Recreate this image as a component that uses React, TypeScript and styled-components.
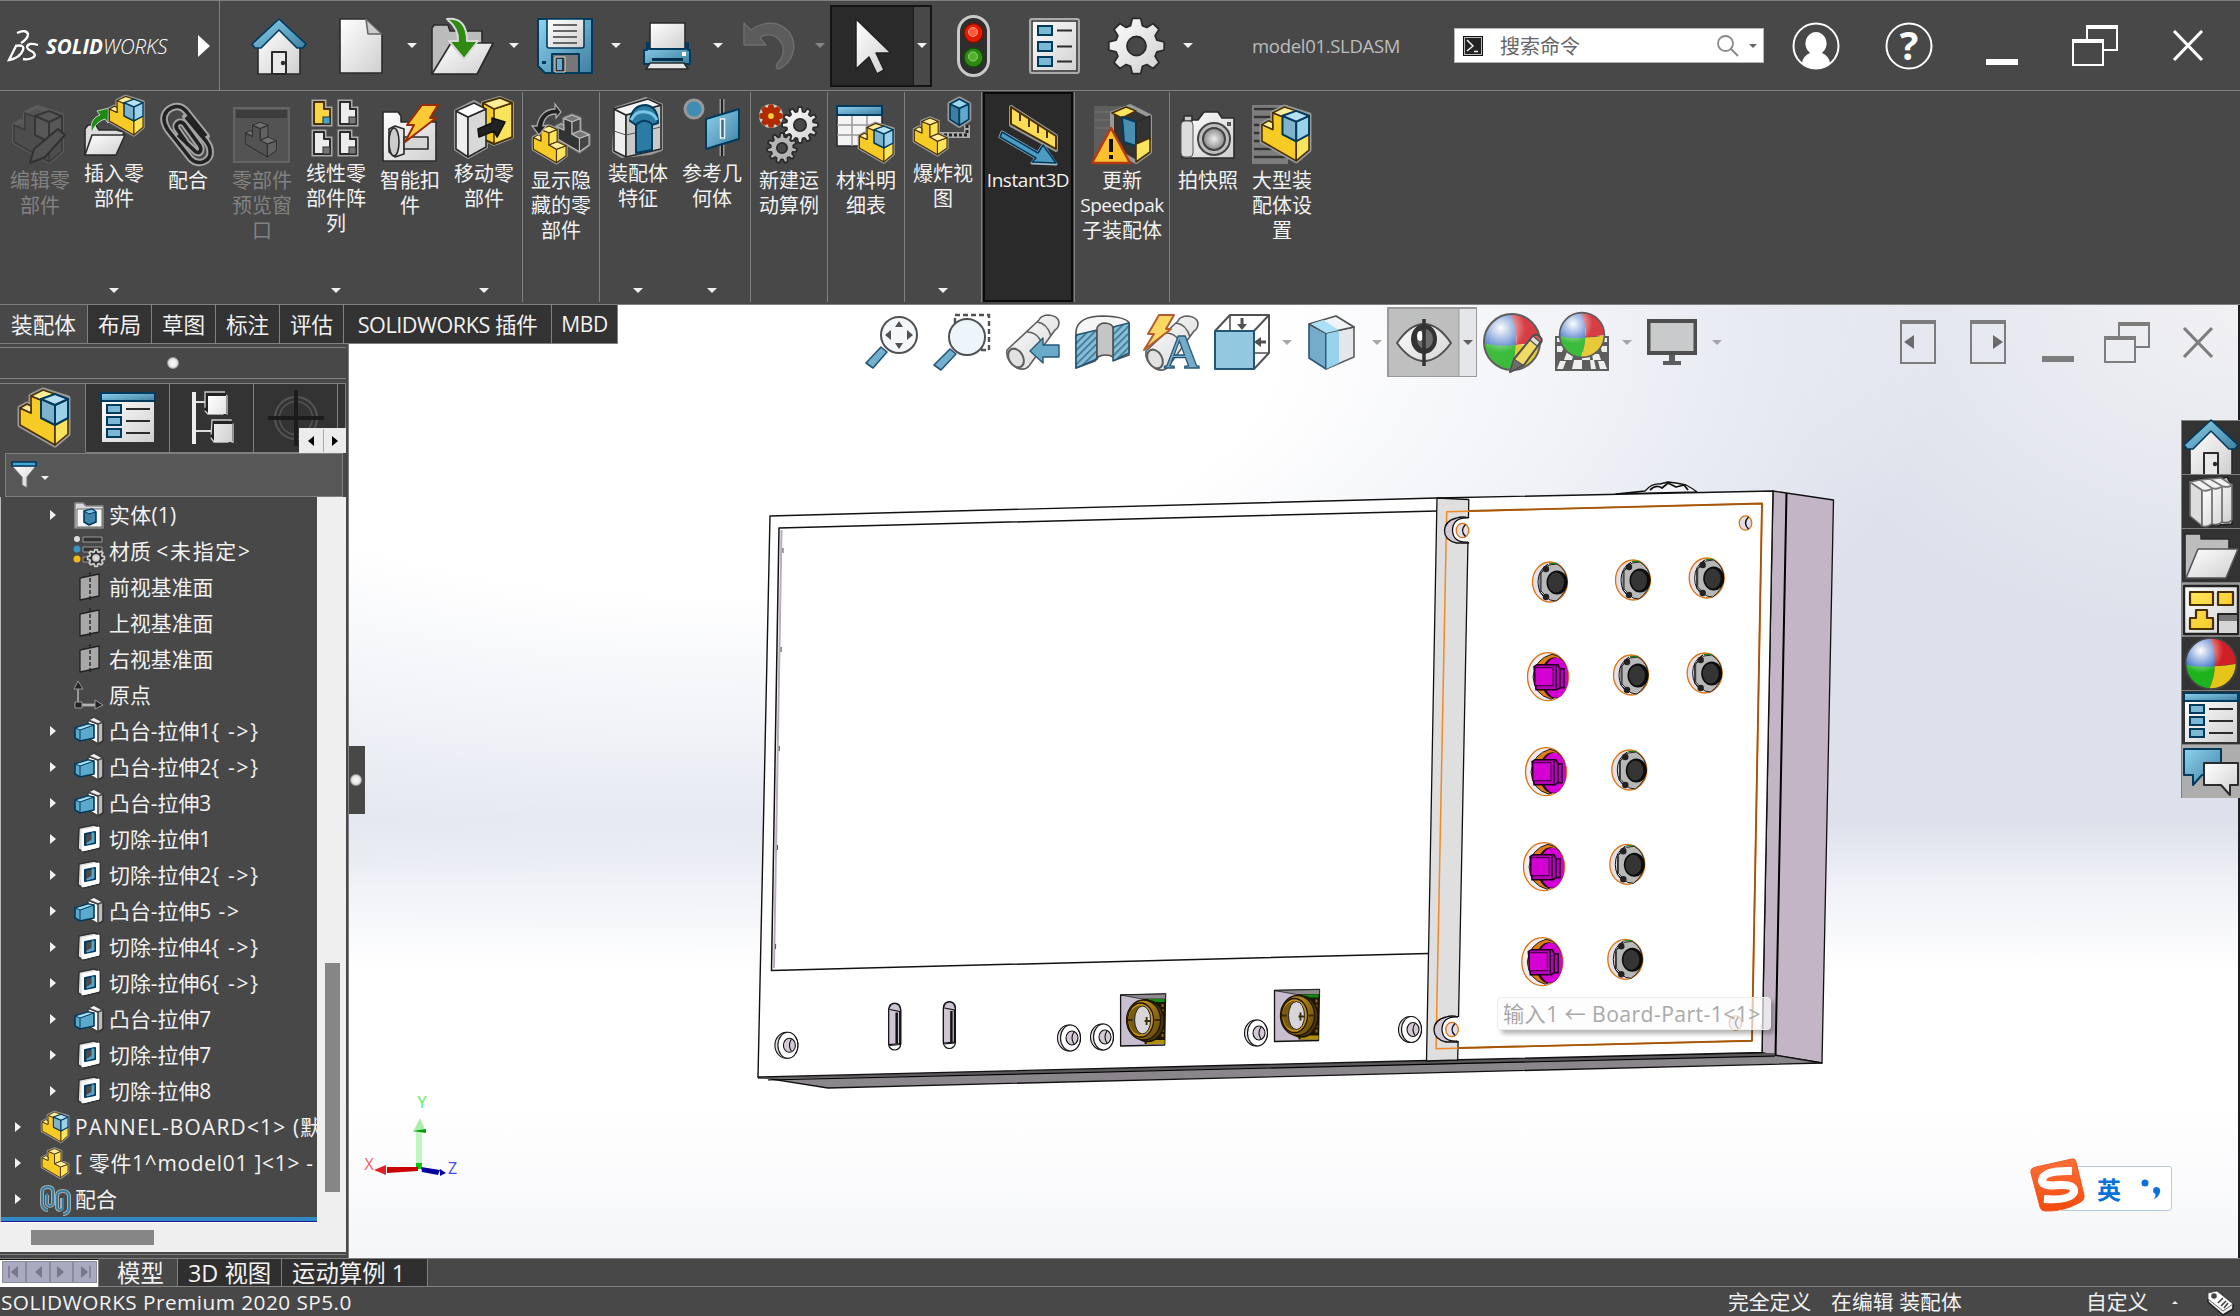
import React, { ReactNode } from 'react';
import styled, { createGlobalStyle, css } from 'styled-components';

const LINE = '#808080';
const BAR = '#484848';
const DARK = '#333333';
const NAVY = '#003a5d';
const BROWN = '#4a3000';
const INK = '#2b2b2b';

const Global = createGlobalStyle`
  * { box-sizing: border-box; }
  html, body { margin: 0; padding: 0; background: ${BAR}; }
  body { overflow: hidden; font-family: "Open Sans", "Noto Sans CJK SC", sans-serif; color: #f2f2f2; }
  svg { display: block; flex: none; overflow: visible; }
`;

const Window = styled.div`
  width: 2240px;
  height: 1316px;
  display: flex;
  flex-direction: column;
  background: ${BAR};
  white-space: nowrap;
`;

/* ---------- title bar ---------- */
const TitleBar = styled.header`
  height: 91px;
  display: flex;
  align-items: center;
  border-top: 1px solid ${LINE};
  border-bottom: 1px solid ${LINE};
`;
const Brand = styled.div`
  width: 220px;
  height: 100%;
  display: flex;
  align-items: center;
  padding-left: 8px;
  border-right: 1px solid ${LINE};
`;
const BrandName = styled.span`
  margin-left: 7px;
  width: 152px;
  font-size: 20.5px;
  font-style: italic;
  font-weight: 300;
  color: #fff;
  letter-spacing: -0.1px;
  b { font-weight: 700; letter-spacing: 0; }
`;
const Slot = styled.div<{ $ml: number; $w?: number }>`
  margin-left: ${p => p.$ml}px;
  ${p => p.$w && css`width: ${p.$w}px;`}
  flex: none;
  display: flex;
  align-items: center;
`;
const Caret = styled.i<{ $color?: string; $size?: number; $up?: boolean }>`
  display: block;
  flex: none;
  width: 0;
  height: 0;
  border: ${p => p.$size ?? 5}px solid transparent;
  ${p => p.$up
    ? css`border-top: 0; border-bottom: ${p.$size ?? 5}px solid ${p.$color ?? '#f0f0f0'};`
    : css`border-bottom: 0; border-top: ${(p.$size ?? 5) + 0.5}px solid ${p.$color ?? '#f0f0f0'};`}
`;
const PickTool = styled.div`
  margin-left: 5px;
  width: 102px;
  height: 82px;
  flex: none;
  display: grid;
  grid-template-columns: 82px 1fr;
  align-items: center;
  justify-items: center;
  border: 2px solid #141414;
  background: linear-gradient(90deg, #2a2a2a 81px, #1c1c1c 81px, #1c1c1c 82px, ${BAR} 82px);
`;
const DocName = styled.span`
  margin-left: 59px;
  width: 202px;
  flex: none;
  font-size: 18.5px;
  letter-spacing: -0.3px;
  color: #bdbdbd;
`;
const Search = styled.div`
  width: 310px;
  height: 35px;
  flex: none;
  display: flex;
  align-items: center;
  padding-left: 8px;
  background: #fff;
  border: 1px solid #b5b5b5;
  color: #666;
  font-size: 20px;
  span { margin-left: 17px; width: 217px; }
`;

/* ---------- ribbon ---------- */
const Ribbon = styled.nav`
  height: 214px;
  display: flex;
  padding: 1px 0 2px 2px;
  border-bottom: 1px solid ${LINE};
`;
const Group = styled.div`
  display: flex;
  padding: 0 1px;
  border-right: 1px solid ${LINE};
  &:last-child { border-right-color: transparent; }
`;
const Command = styled.button<{ $w?: number; $on?: boolean; $off?: boolean; $menu?: boolean }>`
  width: ${p => p.$w ?? 74}px;
  display: flex;
  flex-direction: column;
  align-items: center;
  margin: 0;
  padding: ${p => (p.$menu ? 5 : 12)}px 0 0;
  border: ${p => (p.$on ? '2px solid #0a0a0a' : '0')};
  ${p => p.$on && css`padding-top: 10px;`}
  background: ${p => (p.$on ? '#2a2a2a' : 'transparent')};
  color: ${p => (p.$off ? '#828282' : '#f2f2f2')};
  font: 20px/25px "Open Sans", "Noto Sans CJK SC", sans-serif;
  svg { margin-bottom: 2px; }
  i { margin-top: auto; margin-bottom: 9px; }
`;
const Line = styled.span<{ $latin: boolean }>`
  height: 25px;
  font-size: ${p => (p.$latin ? 19 : 20)}px;
  letter-spacing: ${p => (p.$latin ? -0.45 : 0)}px;
`;

/* ---------- work area ---------- */
const Work = styled.main`
  height: 953px;
  display: grid;
  grid-template: 953px / 2240px;
`;
const Left = styled.div`
  grid-area: 1 / 1;
  z-index: 1;
  justify-self: start;
  display: flex;
  flex-direction: column;
  align-items: flex-start;
`;
const Tabs = styled.div`
  height: 39px;
  display: flex;
  background: ${DARK};
  border-bottom: 1px solid ${LINE};
  border-right: 1px solid ${LINE};
`;
const Tab = styled.div<{ $w: number; $on?: boolean; $latin?: boolean }>`
  width: ${p => p.$w}px;
  height: 38px;
  line-height: 39px;
  text-align: center;
  font-size: 21.6px;
  border-right: 1px solid ${LINE};
  background: ${p => (p.$on ? BAR : DARK)};
  letter-spacing: ${p => (p.$latin ? -0.45 : 0)}px;
  &:last-child { border-right: 0; font-size: 21px; letter-spacing: -0.4px; }
`;
const PanelRow = styled.div`
  display: flex;
  align-items: center;
`;
const Panel = styled.aside`
  width: 349px;
  height: 914px;
  display: flex;
  flex-direction: column;
  background: ${BAR};
  border-right: 1px solid ${LINE};
`;
const Grip = styled.div`
  height: 32px;
  margin-top: 3px;
  width: 346px;
  flex: none;
  display: grid;
  place-items: center;
  border-top: 1px solid ${LINE};
  border-bottom: 1px solid ${LINE};
`;
const Dot = styled.span`
  width: 12px;
  height: 12px;
  border-radius: 50%;
  border: 1px solid #999;
  background: radial-gradient(#f4f4f4 30%, #c4c4c4);
`;
const PanelTabs = styled.div`
  margin-top: 4px;
  height: 70px;
  width: 346px;
  flex: none;
  display: grid;
  grid-template-columns: 86px 84px 84px 84px 8px;
  border-top: 1px solid ${LINE};
  position: relative;
`;
const PanelTab = styled.div<{ $on?: boolean }>`
  display: grid;
  place-items: center;
  border-right: 1px solid ${LINE};
  border-bottom: 1px solid ${p => (p.$on ? BAR : LINE)};
  background: ${p => (p.$on ? BAR : DARK)};
`;
const Pager = styled.div`
  position: absolute;
  right: 0;
  bottom: 0;
  width: 47px;
  height: 25px;
  display: grid;
  grid-template-columns: 1fr 1fr;
  gap: 1px;
  background: #aaa;
  border: 1px solid #e8e8e8;
  border-right: 0;
  span { display: grid; place-items: center; background: #ececec; }
`;
const Filter = styled.div`
  margin-left: 5px;
  width: 338px;
  height: 44px;
  flex: none;
  display: flex;
  align-items: center;
  gap: 3px;
  padding-left: 5px;
  background: #575757;
  border: 1px solid ${LINE};
  i { margin-top: 6px; }
`;
const TreeBox = styled.div`
  width: 346px;
  height: 755px;
  flex: none;
  display: grid;
  grid-template: 726px 29px / 317px 29px;
  background: #efefef;
`;
const Tree = styled.ul`
  margin: 0;
  padding: 0;
  list-style: none;
  overflow: hidden;
  background: ${BAR};
  border-left: 1px solid #b9b9b9;
  border-bottom: 1px solid #fff;
`;
const Row = styled.li<{ $root?: boolean }>`
  height: 36px;
  display: grid;
  grid-template-columns: ${p => (p.$root ? '26px 32px auto' : '61px 33px auto')};
  padding-left: ${p => (p.$root ? 14 : 12)}px;
  align-items: center;
  justify-content: start;
  font-size: 20.9px;
  line-height: 36px;
  > :first-child { justify-self: start; margin-left: ${p => (p.$root ? 0 : 37)}px; }
`;
const RowText = styled.span<{ $ls: number }>`
  margin-left: 2px;
  letter-spacing: ${p => p.$ls}px;
`;
const Suffix = styled.span`
  letter-spacing: 1.8px;
`;
const Arrow = styled.i<{ $show?: boolean; $color?: string; $left?: boolean }>`
  width: 0;
  height: 0;
  border: 5.5px solid transparent;
  ${p => (p.$left ? 'border-left: 0; border-right' : 'border-right: 0; border-left')}: 6px solid ${p => p.$color ?? '#f2f2f2'};
  visibility: ${p => (p.$show ? 'visible' : 'hidden')};
`;
const Rollback = styled.div`
  height: 5px;
  background: #3389c5;
  border-bottom: 1px solid #1c1c9c;
`;
const VTrack = styled.div`
  padding: 466px 6px 31px 8px;
  div { height: 229px; background: #868686; }
`;
const HTrack = styled.div`
  padding: 7px 0 0 31px;
  div { width: 123px; height: 15px; background: #868686; }
`;
const PanelFoot = styled.div`
  height: 3px;
  width: 346px;
  border-bottom: 1px solid ${LINE};
`;
const Splitter = styled.div`
  width: 16px;
  height: 68px;
  margin-top: -42px;
  display: grid;
  place-items: center;
  background: ${BAR};
  padding-right: 2px;
`;

const Viewport = styled.section`
  grid-area: 1 / 1;
  position: relative;
  display: flex;
  flex-direction: column;
  border-right: 2px solid #1c1e22;
  background:
    linear-gradient(180deg, rgba(255,255,255,0) 54%, rgba(255,255,255,.55) 61%, #fff 70%, #fff 84%, #f5f6f9 100%),
    radial-gradient(ellipse 1250px 540px at 700px 40px, #fff 0, #fff 46%, rgba(255,255,255,.55) 72%, rgba(255,255,255,0) 100%),
    radial-gradient(ellipse 480px 330px at 2240px 0, #f1f1f4 0, rgba(238,238,242,0) 100%),
    linear-gradient(90deg, #dfe4ee, #dde1ec 85%, #dee1eb);
`;
const Scene = styled.svg`
  position: absolute;
  left: 0;
  top: 0;
`;
const HeadsUp = styled.div`
  height: 74px;
  display: flex;
  align-items: center;
  padding-left: 865px;
  opacity: 0.85;
  z-index: 1;
`;
const EyeTool = styled.div`
  margin: 0 5px 0 5px;
  width: 90px;
  height: 70px;
  flex: none;
  display: grid;
  grid-template-columns: 70px 1fr;
  align-items: center;
  justify-items: center;
  border: 2px solid #8a8a8a;
  border-width: 2px 1px 1px 2px;
  background: linear-gradient(90deg, #b5b5b5 69px, #9a9a9a 69px, #9a9a9a 70px, #e3e4e8 71px);
`;
const TaskPane = styled.div`
  position: relative;
  z-index: 1;
  width: 59px;
  margin: 41px -2px 0 auto;
  display: flex;
  flex-direction: column;
  border-left: 1px solid ${LINE};
`;
const TaskTab = styled.div<{ $bg?: string }>`
  height: 54px;
  display: grid;
  place-items: center;
  border-top: 1px solid ${LINE};
  background: ${p => p.$bg ?? DARK};
`;
const Hint = styled.div`
  position: absolute;
  left: 1497px;
  top: 692px;
  width: 274px;
  height: 33px;
  padding-left: 5px;
  line-height: 31px;
  font-size: 21.2px;
  letter-spacing: 0.4px;
  color: #a9a9a9;
  border: 1px solid #ededed;
  border-radius: 4px;
  background: rgba(252,252,253,.68);
  box-shadow: 4px 4px 4px rgba(0,0,0,.28);
`;
const Ime = styled.div`
  position: absolute;
  z-index: 1;
  left: 2030px;
  top: 853px;
  display: flex;
  align-items: center;
`;
const ImeBox = styled.div`
  position: relative;
  z-index: -1;
  margin-left: -26px;
  width: 112px;
  height: 45px;
  margin-top: 7px;
  padding-left: 36px;
  display: flex;
  align-items: center;
  gap: 20px;
  background: #fff;
  border: 1px solid #b8cbe4;
  border-radius: 3px;
  color: #0a70da;
  font-size: 24px;
  font-weight: 700;
`;

/* ---------- bottom ---------- */
const SheetBar = styled.div`
  height: 29px;
  display: flex;
  border-bottom: 1px solid ${LINE};
  border-top: 1px solid ${LINE};
`;
const SheetNav = styled.div`
  width: 99px;
  height: 28px;
  padding: 1px 1px 4px 2px;
  display: grid;
  grid-template-columns: repeat(4, 1fr);
  background: #fff;
  border-top: 1px solid #111;
  border-right: 1px solid ${LINE};
  span { display: grid; place-items: center; background: #a9a9bf; border: 1px solid #8b8b9e; }
`;
const Sheet = styled.div<{ $w: number; $on?: boolean; $pad: number }>`
  width: ${p => p.$w}px;
  padding-left: ${p => p.$pad}px;
  line-height: 29px;
  font-size: 23.4px;
  background: ${p => (p.$on ? BAR : '#2f2f2f')};
  border-right: 1px solid ${LINE};
`;
const Status = styled.footer`
  height: 29px;
  display: flex;
  align-items: center;
  padding: 2px 0 0 1px;
  font-size: 20.8px;
  line-height: 27px;
`;
const Cell = styled.div<{ $w: number; $ls?: number }>`
  width: ${p => p.$w}px;
  letter-spacing: ${p => p.$ls ?? 0}px;
  flex: none;
`;

/* ---------- icon pieces ---------- */
type G = { d: string; f?: string; s?: string; w?: number };
const S = ({ d, f = 'none', s = INK, w = 1.6 }: G) => (
  <path d={d} fill={f} stroke={s} strokeWidth={w} strokeLinejoin="round" />
);
const Ico = ({ w, h, vb, children }: { w: number; h: number; vb?: string; children: ReactNode }) => (
  <svg width={w} height={h} viewBox={vb ?? `0 0 ${w} ${h}`}>{children}</svg>
);
const DefsSvg = styled.svg`
  position: absolute;
`;

const Defs = () => (
  <DefsSvg width="0" height="0">
    <defs>
      <linearGradient id="paper" x1="0" y1="0" x2="1" y2="1"><stop offset="0" stopColor="#fff" /><stop offset="1" stopColor="#cfcfcf" /></linearGradient>
      <linearGradient id="blue" x1="0" y1="0" x2="1" y2="1"><stop offset="0" stopColor="#8ed3f0" /><stop offset="1" stopColor="#3f7f9f" /></linearGradient>
      <linearGradient id="gold" x1="0" y1="0" x2="1" y2="1"><stop offset="0" stopColor="#ffe65c" /><stop offset="1" stopColor="#f3c21a" /></linearGradient>
      <linearGradient id="brass" x1="0" y1="0" x2="1" y2="1"><stop offset="0" stopColor="#d9a322" /><stop offset="1" stopColor="#5c430a" /></linearGradient>
      <linearGradient id="ime" x1="0" y1="0" x2="0" y2="1"><stop offset="0" stopColor="#fb6f3a" /><stop offset="1" stopColor="#f24a0c" /></linearGradient>
      <radialGradient id="shine" cx=".3" cy=".25" r=".55"><stop offset="0" stopColor="#fff" /><stop offset=".8" stopColor="#fff" stopOpacity="0" /></radialGradient>
      <radialGradient id="lens"><stop offset="0" stopColor="#eee" /><stop offset="1" stopColor="#888" /></radialGradient>
      <pattern id="hatch" width="5" height="5" patternUnits="userSpaceOnUse" patternTransform="rotate(45)"><rect width="5" height="5" fill="#6fb4d3" /><rect width="1.6" height="5" fill="#1d5876" /></pattern>
      <clipPath id="ball"><circle cx="30" cy="30" r="28" /></clipPath>
    </defs>
  </DefsSvg>
);

const AsmShape = () => (
  <g>
    <S d="M2 20L9 16L13 18V8L25 2L50 10V46L37 57L2 37Z" f="#999" s="#999" w={5} />
    <S d="M2 20L13 25V8L23 12V30L37 37V57L2 37Z" f="#f7cb25" s={BROWN} />
    <S d="M37 37L50 30V46L37 57Z" f="#fbe45d" s={BROWN} />
    <S d="M13 8L25 2L37 6L23 12Z" f="#fdee9a" s={BROWN} />
    <S d="M2 20L9 16L13 18V25Z" f="#fdee9a" s={BROWN} />
    <S d="M23 11L37 17V37L23 30Z" f="#7fb2cc" s={NAVY} w={2} />
    <S d="M37 17L50 11V30L37 37Z" f="#9bd2ea" s={NAVY} w={2} />
    <S d="M23 11L37 6L50 11L37 17Z" f="#b9e0f1" s={NAVY} w={2} />
  </g>
);
const PartShape = ({ a = '#f7cb25', b = '#fbe45d', c = '#fdee9a', s = BROWN, halo = '#999' }) => (
  <g>
    <S d="M2 20L9 16L13 18V8L25 3L37 8V26L50 32V47L36 57L2 37Z" f={halo} s={halo} w={5} />
    <S d="M2 20L13 25V8L25 13V31L36 37V57L2 37Z" f={a} s={s} />
    <S d="M36 37L50 32V47L36 57ZM25 13L37 8V26L25 31Z" f={b} s={s} />
    <S d="M13 8L25 3L37 8L25 13ZM25 31L37 26L50 32L36 37ZM2 20L9 16L13 18V25Z" f={c} s={s} />
  </g>
);
const Box3 = ({ x = 0, y = 0, k = 1 }) => (
  <g transform={`translate(${x} ${y}) scale(${k})`}>
    <S d="M0 6L11 0L22 6V24L11 31L0 24Z" f="#999" s="#999" w={6} />
    <S d="M0 6L11 11V31L0 24Z" f="#3c7fa0" s={NAVY} w={2} />
    <S d="M11 11L22 6V24L11 31Z" f="#63a9cb" s={NAVY} w={2} />
    <S d="M0 6L11 0L22 6L11 11Z" f="#9bd6ee" s={NAVY} w={2} />
  </g>
);
const Gear = ({ cx, cy, r, n = 8, f = 'url(#paper)', hole = BAR, s = INK }: any) => {
  const pts: string[] = [];
  for (let i = 0; i < n; i++) {
    const a = (i * 2 * Math.PI) / n;
    const u = Math.PI / n;
    ([[-0.72, 0.76], [-0.38, 1], [0.38, 1], [0.72, 0.76]] as number[][]).forEach(([o, q]) =>
      pts.push(`${(cx + Math.sin(a + o * u) * r * q).toFixed(1)} ${(cy - Math.cos(a + o * u) * r * q).toFixed(1)}`));
  }
  return (
    <g>
      <S d={`M${pts.join('L')}Z`} f={f} s={s} w={1.8} />
      <circle cx={cx} cy={cy} r={r * 0.34} fill={hole} stroke={s} strokeWidth="1.8" />
    </g>
  );
};
const Ball = () => (
  <g>
    <g clipPath="url(#ball)">
      <rect width="34" height="34" fill="#2c63c4" />
      <path d="M28 0Q36 18 34 33L60 30V0Z" fill="#d21f26" />
      <path d="M0 31Q18 35 34 33Q34 46 27 60H0Z" fill="#1db31d" />
      <path d="M34 33Q34 46 27 60H60V30Q46 33 34 33Z" fill="#e6c318" />
    </g>
    <circle cx="30" cy="30" r="28" fill="url(#shine)" stroke="#444" strokeWidth="2" />
  </g>
);
const House = () => (
  <g>
    <S d="M7 26V56H49V26L28 8Z" f="url(#paper)" />
    <S d="M21 56V34H35V56Z" f="#e9e9e9" w={2} />
    <circle cx="32" cy="45" r="2.2" fill={INK} />
    <S d="M28 1L55 26L52 30H46L28 12L10 30H4L1 26Z" f="url(#blue)" s={NAVY} />
  </g>
);
const ListCard = () => (
  <g>
    <path d="M2 6H54V50H2Z" fill="url(#paper)" />
    <S d="M1 1H55V9H1Z" f="url(#blue)" s={NAVY} w={2} />
    {[13, 25, 37].map(y => (
      <g key={y}>
        <rect x="7" y={y} width="14" height="8" fill="#79b9d6" stroke={NAVY} strokeWidth="2" />
        <path d={`M26 ${y + 4}H50`} stroke={INK} strokeWidth="2" />
      </g>
    ))}
  </g>
);
const Restore = ({ c, w = 46, bg = BAR }: { c: string; w?: number; bg?: string }) => (
  <Ico w={w} h={41} vb="0 0 46 41">
    <rect x="15" y="1" width="30" height="24" fill="none" stroke={c} strokeWidth="2" /><path d="M14 2H46" stroke={c} strokeWidth="4" />
    <rect x="1" y="15" width="30" height="25" fill={bg} stroke={c} strokeWidth="2" /><path d="M0 16H32" stroke={c} strokeWidth="4" />
  </Ico>
);
const Cross = ({ c }: { c: string }) => <Ico w={32} h={31}><path d="M2 1L30 30M30 1L2 30" stroke={c} strokeWidth="3.2" /></Ico>;

/* ribbon pictures, all in a 60 x 60 box */
const pics: Record<string, ReactNode> = {
  edit: <g opacity=".85"><g transform="translate(2,1)"><S d="M2 20L9 16L13 18V8L25 2L50 10V46L37 57L2 37Z" f="#555" s="#5f5f5f" w={4} /><S d="M2 20L13 25V8L23 12V30L37 37V57L2 37ZM37 37L50 30V46L37 57Z" f="#4f4f4f" s="#393939" /><S d="M23 11L37 17V37L23 30ZM37 17L50 11V30L37 37ZM23 11L37 6L50 11L37 17Z" f="#5a5a5a" s="#333" w={2} /></g><S d="M20 59L24 45L48 25L55 31L35 53Z" f="#555" s="#2f2f2f" w={2} /></g>,
  insert: <g><S d="M1 58V32L4 28H12L15 33H32L40 35L31 58Z" f="#ddd" /><S d="M1 58L8 38H41L32 58Z" f="url(#paper)" />
    <path d="M8 36C5 26 10 20 16 18L13 14L25 11L24 26L21 22C15 24 10 28 8 36Z" fill="#1f8a12" stroke="#eee" strokeWidth=".8" />
    <g transform="translate(24,-2) scale(.7)"><AsmShape /></g></g>,
  mate: <g><path d="M48 32L28 7C22 0 14 2 9 7C4 13 6 20 10 26L33 55C40 62 54 58 52 46C52 42 50 40 48 37L28 13M20 31L38 48C42 50 44 46 42 42L26 20C22 16 16 20 19 25L30 41" fill="none" stroke="#fff" strokeWidth="7.5" opacity=".5" strokeLinecap="round" />
    <path d="M48 32L28 7C22 0 14 2 9 7C4 13 6 20 10 26L33 55C40 62 54 58 52 46C52 42 50 40 48 37L28 13M20 31L38 48C42 50 44 46 42 42L26 20C22 16 16 20 19 25L30 41" fill="none" stroke="#222" strokeWidth="3.6" /></g>,
  preview: <g opacity=".85"><rect x="2" y="4" width="55" height="54" fill="#555" stroke="#6a6a6a" strokeWidth="2" /><rect x="4" y="6" width="51" height="8" fill="#3a3a3a" /><g transform="translate(12,16) scale(.65)"><PartShape a="#555" b="#666" c="#777" s="#2c2c2c" halo="#5e5e5e" /></g></g>,
  pattern: <g>{[[8, 5, 1], [34, 5, 0], [8, 35, 0], [34, 35, 0]].map(([x, y, on]) => (
    <g key={`${x}${y}`} transform={`translate(${x} ${y})`}><path d="M0 0H10V7H16V22H0Z" fill="#aaa" stroke="#aaa" strokeWidth="5" />
      <S d="M0 0H10V7H16V22H0Z" f={on ? '#fad645' : '#ececec'} s={on ? BROWN : INK} w={2} /><rect x="9" y="15" width="7" height="7" fill={on ? '#3ea4d6' : '#777'} stroke={INK} /></g>))}</g>,
  smart: <g><S d="M3 57V8H18L21 12V18H56V57Z" f="url(#paper)" /><S d="M9 25L15 22L24 25V50L15 53L9 48Z" f="#e4e4e4" /><ellipse cx="14" cy="38" rx="5" ry="14" fill="#ccc" stroke={INK} strokeWidth="1.6" />
    <S d="M24 33H48V45H24Z" f="#d6d6d6" /><S d="M42 1H58L50 14H56L25 38L34 21H27Z" f="#f9c936" s="#9a2c00" w={2} /></g>,
  move: <g><S d="M2 14L20 5L32 12V50L14 60L2 52Z" f="#999" s="#999" w={4} /><S d="M29 6L46 1L58 6V40L40 47L29 42Z" f="#999" s="#999" w={4} /><S d="M29 6L46 1L58 6V40L40 47L29 42Z" f="#f7cb25" s={BROWN} w={2} /><S d="M40 12L58 6V40L40 47Z" f="#fbe45d" s={BROWN} /><S d="M29 6L46 1L58 6L40 12Z" f="#fdee9a" s={BROWN} />
    <S d="M2 14L14 20V60L2 52Z" f="#eee" /><S d="M14 20L32 12V50L14 60Z" f="#d8d8d8" /><S d="M2 14L20 6L32 12L14 20Z" f="#fff" />
    <S d="M24 32L38 26V21L51 25L43 40L40 34L25 40Z" f="#222" s="#111" /></g>,
  hide: <g><g transform="translate(24,9) scale(.68)"><PartShape a="#333" b="#444" c="#777" s="#bbb" halo="#777" /></g><g transform="translate(1,20) scale(.68)"><PartShape /></g>
    <path d="M6 22C8 10 16 5 24 5V0L30 8L25 14V10C18 10 13 14 12 22L16 21L8 31L1 22Z" fill="#222" stroke="#aaa" strokeWidth="1.3" /></g>,
  feature: <g><S d="M8 12L38 2L53 8V52L42 56L14 59L6 54Z" f="#999" s="#999" w={4} /><S d="M6 12L18 18V60L6 54Z" f="#efefef" /><S d="M18 18L53 8V52L18 60Z" f="#c9c9c9" /><S d="M6 12L40 2L53 8L18 18Z" f="#f5f5f5" />
    <path d="M6 34L18 38L53 30" stroke="#555" fill="none" /><S d="M22 24Q24 8 38 8Q50 10 50 26L44 28V53L28 56V28Z" f="#2c7ba3" s={NAVY} w={2} /><path d="M23 23Q28 13 38 15Q46 16 49 23" stroke="#7cc7e6" strokeWidth="3" fill="none" /><path d="M28 28Q36 20 44 27" stroke={NAVY} strokeWidth="2" fill="none" /></g>,
  ref: <g><circle cx="12" cy="12" r="9" fill="#3d8db5" stroke="#999" strokeWidth="3" /><path d="M40 2V59" stroke="#999" strokeWidth="5" /><path d="M40 2V59" stroke="#222" strokeWidth="2" /><S d="M24 22L57 12V42L24 52Z" f="url(#blue)" s={NAVY} w={2} /><rect x="38.500" y="22" width="4" height="19" fill="#2b6d8e" stroke="#eee" strokeWidth="1.5" /></g>,
  study: <g><circle cx="12" cy="12" r="12" fill="#ccc" /><Gear cx={12} cy={12} r={11} f="#b02c00" s="#b02c00" hole="#ffd23c" /><Gear cx={41} cy={21} r={18} n={12} /><Gear cx={23} cy={44} r={15} n={11} f="#b5b5b5" /></g>,
  bom: <g><S d="M1 2H46V42H1Z" f="#f4f4f4" /><path d="M1 21H46M1 31H46M16 12V42M31 12V42" stroke="#999" strokeWidth="1.5" /><S d="M1 2H46V11H1Z" f="url(#blue)" s={NAVY} w={2} /><g transform="translate(22,18) scale(.7)"><AsmShape /></g></g>,
  explode: <g><path d="M26 38H54V28" stroke="#aaa" strokeWidth="6" fill="none" /><path d="M26 38H54V28" stroke="#222" strokeWidth="3" fill="none" strokeDasharray="3 2" /><g transform="translate(0,19) scale(.68)"><PartShape /></g><Box3 x={37} y={2} k={0.85} /></g>,
  instant: <g><S d="M13 3L58 32V46L13 21Z" f="#999" s="#999" w={4} /><S d="M13 3L58 32V45L13 20Z" f="#fbdc55" s={BROWN} w={2} /><path d="M22 9V17M31 15V23M40 21V29M49 26V34" stroke={BROWN} strokeWidth="2" />
    <S d="M4 28L40 49L45 41L58 60L34 59L38 54L2 33Z" f="#4d9cc2" s="#9fb9c6" w={3} /><S d="M4 28L40 49L45 41L58 59L34 58L38 54L2 33Z" f="#4d9cc2" s={NAVY} /></g>,
  speed: <g><path d="M2 2H30V60H2Z" fill="#6e6e6e" opacity=".6" /><path d="M3 8H30M3 16H30M3 24H30" stroke="#777" /><S d="M20 9L38 2L58 12V48L44 58L20 44Z" f="#333" s="#999" w={4} /><S d="M20 9L34 3L44 7L30 14Z" f="#fbe45d" s={BROWN} /><S d="M30 13L44 18V42L32 38Z" f="#4a8fb2" s={NAVY} w={2} /><S d="M44 18L58 12V36L44 42Z" f="#333" /><S d="M44 40L58 34V48L44 58Z" f="#fbe45d" s={BROWN} /><S d="M19 24L38 59H0Z" f="#fbc02d" s="#b33a12" w={2.5} /><path d="M19 35V48M19 51V55" stroke="#111" strokeWidth="4" /></g>,
  camera: <g><S d="M4 16H20L26 8H40L44 14H56V54H4Z" f="url(#paper)" /><S d="M6 12H14V17H6Z" f="#ccc" /><rect x="3" y="17" width="12" height="36" rx="4" fill="#ddd" stroke="#555" /><circle cx="36" cy="35" r="16" fill="#bdbdbd" stroke="#444" strokeWidth="2" /><circle cx="36" cy="35" r="11" fill="url(#lens)" stroke="#444" strokeWidth="2" /><rect x="49" y="18" width="4" height="4" fill="#555" /></g>,
  large: <g><path d="M0 1H36V60H0Z" fill="#8f8f8f" opacity=".75" />{[5, 13, 21, 29, 37, 45, 53].map(y => <path key={y} d={`M2 ${y}H34`} stroke="#333" strokeWidth="2.400" />)}<g transform="translate(8,1) scale(.98)"><AsmShape /></g></g>,
};

type Cmd = { pic: string; lines: string[]; w?: number; on?: boolean; off?: boolean; menu?: boolean };
const groups: Cmd[][] = [
  [
    { pic: 'edit', lines: ['编辑零', '部件'], off: true },
    { pic: 'insert', lines: ['插入零', '部件'], menu: true },
    { pic: 'mate', lines: ['配合'] },
    { pic: 'preview', lines: ['零部件', '预览窗', '口'], off: true },
    { pic: 'pattern', lines: ['线性零', '部件阵', '列'], menu: true },
    { pic: 'smart', lines: ['智能扣', '件'] },
    { pic: 'move', lines: ['移动零', '部件'], menu: true },
  ],
  [{ pic: 'hide', lines: ['显示隐', '藏的零', '部件'] }],
  [
    { pic: 'feature', lines: ['装配体', '特征'], menu: true },
    { pic: 'ref', lines: ['参考几', '何体'], menu: true },
  ],
  [{ pic: 'study', lines: ['新建运', '动算例'] }],
  [{ pic: 'bom', lines: ['材料明', '细表'] }],
  [{ pic: 'explode', lines: ['爆炸视', '图'], menu: true }],
  [{ pic: 'instant', lines: ['Instant3D'], w: 90, on: true }],
  [{ pic: 'speed', lines: ['更新', 'Speedpak', '子装配体'], w: 92 }],
  [
    { pic: 'camera', lines: ['拍快照'] },
    { pic: 'large', lines: ['大型装', '配体设', '置'] },
  ],
];

/* tree pictures, 30 x 30 */
const boss = <g><S d="M14 4L20 1L29 6V25L24 28L14 22Z" f="#bbb" s="#333" /><S d="M14 4L24 8V28L14 22Z" f="#fff" s="#444" /><S d="M14 4L20 1L29 6L24 8Z" f="#eee" s="#444" /><S d="M1 12L14 8L20 9V22L6 25L1 22Z" f="#5ba9cc" s={NAVY} /><S d="M1 12L14 8L20 9L6 14Z" f="#a5dcf2" s={NAVY} w={1} /><path d="M6 14V25" stroke={NAVY} /></g>;
const cut = <g><S d="M5 4L20 1L26 3V24L10 28L4 25Z" f="#dedede" s="#333" /><S d="M8 6L25 3V23L8 27Z" f="#fff" s="#fff" w={1} /><S d="M11 10L21 8V19L11 21Z" f="#4a4a4a" s={NAVY} w={2} /><S d="M13 19L18 16V9L20 9V18L13 20Z" f="#5aa3c5" s="#5aa3c5" w={1} /></g>;
const plane = <g><S d="M6 6L25 2V24L6 28Z" f="#a8a8a8" s="#222" w={1.3} /><path d="M16 0V30" stroke="#222" strokeWidth="1.4" strokeDasharray="4 2" /></g>;
const treePics: Record<string, ReactNode> = {
  boss, cut, plane,
  body: <g><S d="M1 28V3H9L12 6H29V28Z" f="#d9d9d9" s="#888" /><S d="M3 9H28V27H3Z" f="#f6f6f6" s="#666" w={1} /><S d="M10 11L18 9L22 12V22L15 25L10 22Z" f="#3f87aa" s={NAVY} /><S d="M10 11L18 9L22 12L15 14Z" f="#7cc4e4" s={NAVY} w={1} /></g>,
  mat: <g><circle cx="3" cy="3" r="3" fill="#ddd" /><circle cx="3" cy="13" r="3.500" fill="#3a94c4" /><circle cx="3" cy="23" r="3.500" fill="#f0bb12" /><path d="M9 1H28V6H9ZM9 11H28V16H9ZM9 21H16V26H9Z" fill="#333" stroke="#999" /><Gear cx={22} cy={22} r={8.5} f="#333" s="#ccc" hole="#ddd" /></g>,
  origin: <g stroke="#999" strokeWidth="1"><path d="M3.500 8V23H4.500V8ZM8 24V26H22V24Z" fill="#ccc" /><path d="M4 1L9 9H0ZM29 25L21 20V29ZM1 22H8V28H1Z" fill="#222" /></g>,
  asm: <g transform="translate(0,-1) scale(.54)"><AsmShape /></g>,
  part: <g transform="translate(0,-1) scale(.54)"><PartShape /></g>,
  mates: <g fill="none"><path d="M6 11V20Q9 24 12 20V8Q12 3 7 3Q1 3 1 8V20Q2 26 7 26M21 14V24Q18 28 16 24V12Q16 7 22 7Q27 7 28 12V25Q27 30 22 30" stroke="#aaa" strokeWidth="4" /><path d="M6 9V20Q9 24 12 20V8Q12 3 7 3Q1 3 1 8V20Q2 26 7 26M22 14V24Q19 28 16 24V12Q16 7 22 7Q27 7 28 12V25Q27 30 22 30" stroke="#2f80a8" strokeWidth="2" /></g>,
};

type Node = { pic: string; text: string; tail?: string; open?: boolean; root?: boolean; ls?: number };
const rows: Node[] = [
  { pic: 'body', text: '实体(1)', open: true, ls: 0.3 },
  { pic: 'mat', text: '材质 ', tail: '<未指定>' },
  { pic: 'plane', text: '前视基准面' },
  { pic: 'plane', text: '上视基准面' },
  { pic: 'plane', text: '右视基准面' },
  { pic: 'origin', text: '原点' },
  { pic: 'boss', text: '凸台-拉伸1', tail: '{ ->}', open: true },
  { pic: 'boss', text: '凸台-拉伸2', tail: '{ ->}', open: true },
  { pic: 'boss', text: '凸台-拉伸3', open: true },
  { pic: 'cut', text: '切除-拉伸1', open: true },
  { pic: 'cut', text: '切除-拉伸2', tail: '{ ->}', open: true },
  { pic: 'boss', text: '凸台-拉伸5', tail: ' ->', open: true },
  { pic: 'cut', text: '切除-拉伸4', tail: '{ ->}', open: true },
  { pic: 'cut', text: '切除-拉伸6', tail: '{ ->}', open: true },
  { pic: 'boss', text: '凸台-拉伸7', open: true },
  { pic: 'cut', text: '切除-拉伸7', open: true },
  { pic: 'cut', text: '切除-拉伸8', open: true },
  { pic: 'asm', text: 'PANNEL-BOARD<1> (默', open: true, root: true, ls: 1.2 },
  { pic: 'part', text: '[ 零件1^model01 ]<1> -', open: true, root: true, ls: 0.75 },
  { pic: 'mates', text: '配合', open: true, root: true },
];

/* ---------- model ---------- */
const Push = ({ x, y }: { x: number; y: number }) => (
  <g transform={`translate(${x} ${y})`}>
    <ellipse rx="17.500" ry="20" fill="#e4dfe8" stroke="#d9730d" strokeWidth="1.3" />
    <path d="M-2 -18L-10 -8V10L-3 17Q-12 12 -12 0Q-12 -12 -2 -18Z" fill="#fff" stroke="#111" strokeWidth="1" />
    <path d="M-1 -17L7 -18Q17 -12 17 0Q16 12 6 19L0 18L-9 9V-9Z" fill="#b8b8b8" stroke="#222" strokeWidth="1" />
    <circle cx="-4" cy="-13" r="3.200" fill="#222" /><circle cx="-4" cy="15" r="3.200" fill="#222" />
    <ellipse cx="7" cy="0.500" rx="10.500" ry="12" fill="#0c0c0c" /><ellipse cx="6" cy="0.500" rx="8" ry="10" fill="#353535" />
    <path d="M-1 -18.500H7" stroke="#1b7a1b" strokeWidth="1.200" />
  </g>
);
const Led = ({ x, y }: { x: number; y: number }) => (
  <g transform={`translate(${x} ${y})`}>
    <ellipse rx="20.500" ry="24" fill="#f1edf4" stroke="#d9730d" strokeWidth="1.3" />
    <path d="M4 -22.500Q18 -20 19.500 -2Q19 18 3 22.500Q-14 18 -15 0Q-13 -18 4 -22.500Z" fill="#e07c14" stroke="#222" strokeWidth="1" />
    <ellipse cx="6.500" cy="1" rx="13.500" ry="20.500" fill="#1c0d1c" /><ellipse cx="8" cy="1" rx="12.200" ry="20" fill="#d400d4" />
    <path d="M-14 -10L-11 -12H10L12 -8H16V11H12L9 13H-12Z" fill="#b800b8" stroke="#1a001a" strokeWidth="1.500" />
    <path d="M-13 -9H5V9H-13Z" fill="#d400d4" stroke="#300030" strokeWidth="1" /><path d="M8 -11V12M12 -8V11" stroke="#1a001a" strokeWidth="1.500" />
  </g>
);
const Screw = ({ x, y }: { x: number; y: number }) => (
  <g transform={`translate(${x} ${y})`} stroke="#111" strokeWidth="1.100">
    <ellipse rx="11.500" ry="13" fill="#e3dde8" /><ellipse cx="1.500" rx="10" ry="13" fill="#fff" /><ellipse cx="3" cy="0" rx="6" ry="7" fill="#d2c8d6" />
    <path d="M5 -6Q1 0 5 6" fill="none" />
  </g>
);
const Jack = ({ x, y }: { x: number; y: number }) => (
  <g transform={`translate(${x} ${y})`} strokeLinejoin="round">
    <path d="M0 1L45 0L44 51L0 52Z" fill="#c9bed0" stroke="#111" strokeWidth="1.300" />
    <path d="M0 1L45 0V5H22Z" fill="#8f8a90" stroke="#222" strokeWidth=".8" /><path d="M22 5H44.500V50H24Z" fill="#1a1504" />
    <path d="M28 5H44V8H28Z" fill="#128a12" /><path d="M26 46H44V50H26Z" fill="#b09008" /><path d="M42 10V44" stroke="#8a6a14" strokeWidth="2" strokeDasharray="3 2" />
    <ellipse cx="27" cy="27" rx="16.500" ry="20.500" fill="#4a360a" stroke="#1c1300" strokeWidth="1.500" />
    <ellipse cx="23" cy="26" rx="17" ry="20" fill="url(#brass)" stroke="#1c1300" strokeWidth="1.300" />
    <ellipse cx="20" cy="26" rx="13" ry="17" fill="#c8941c" stroke="#1c1300" strokeWidth="1.300" />
    <path d="M20 11Q8 14 8 26Q9 39 20 41Q14 26 20 11Z" fill="#7a5a0f" />
    <ellipse cx="22" cy="26" rx="8" ry="14" fill="#d8d5da" stroke="#222" strokeWidth="1" />
    <path d="M26 23V31M24 27H30M7 26H12M34 26H40" stroke="#3a2a04" strokeWidth="1.800" />
  </g>
);
const Port = ({ x, y }: { x: number; y: number }) => (
  <g transform={`translate(${x} ${y})`} stroke="#111" strokeWidth="1.200">
    <rect x="-6" y="-23.500" width="12" height="47" rx="6" fill="#fff" /><path d="M-6 -16Q-5 -23 0 -23Q5 -23 6 -16V17L-6 18Z" fill="#cfc4d4" />
    <path d="M-5 -17L5 -15V18L-5 19" fill="none" /><path d="M2 -14V17" strokeWidth="2.500" />
  </g>
);
const Hole = ({ x, y }: { x: number; y: number }) => (
  <g transform={`translate(${x} ${y})`}><ellipse rx="6.300" ry="7.200" fill="#e3dde8" stroke="#d9730d" strokeWidth="1.300" /><path d="M3 -6Q-3 0 3 6" fill="none" stroke="#111" strokeWidth="1.400" /></g>
);
const BossHole = ({ x, y }: { x: number; y: number }) => (
  <g transform={`translate(${x} ${y})`}>
    <path d="M6 -12Q0 -14 -6 -12Q-18 -9 -18 1Q-18 10 -6 13H6Z" fill="#d3cad8" stroke="#111" strokeWidth="1.300" />
    <path d="M7.500 -12Q-10 -13 -10 1Q-9 13 7 12Z" fill="#fff" stroke="none" /><path d="M6 -12Q-10 -13 -10 1Q-9 13 5.500 12" fill="none" stroke="#111" strokeWidth="1.300" /><Hole x={0} y={0.5} />
  </g>
);

const Model = () => (
  <Scene width={2238} height={952} viewBox="0 305 2238 952">
    <g strokeLinejoin="round">
      <path d="M1616 494L1645 491Q1652 483 1660 484L1668 482Q1678 483 1686 485Q1692 488 1697 492Z" fill="#f4f5f8" stroke="#111" strokeWidth="1.300" />
      <path d="M1650 490Q1656 484 1662 488L1668 483L1676 487L1684 485L1688 490" fill="none" stroke="#111" strokeWidth="1.800" />
      <path d="M1773 491L1833.500 500L1822 1063L1762 1053Z" fill="#c3b5c5" stroke="#111" strokeWidth="1.300" />
      <path d="M1786.500 493L1775.500 1055" stroke="#000" strokeWidth="2" />
      <path d="M758 1077L1762 1053L1822 1063L828 1088Z" fill="#8b868b" stroke="#111" strokeWidth="1.300" />
      <path d="M758 1077L1775 1055" stroke="#5b575b" strokeWidth="4" /><path d="M768 1080L1775 1056" stroke="#000" strokeWidth="1.200" />
      <path d="M770 516L1437 498L1773 491L1762 1052.500L1427 1060.500L758 1077Z" fill="#fff" stroke="#111" strokeWidth="1.400" />
      <path d="M1437 498L1468.800 499.500L1457.700 1060L1426.500 1061Z" fill="#dfdfdf" stroke="#111" strokeWidth="1.300" />
      <path d="M1437 511L779 528L771.500 970.500L1428 953.500" fill="none" stroke="#111" strokeWidth="1.500" />
      <path d="M781.500 530L774 968" stroke="#b9adbd" strokeWidth="2" /><path d="M783 548L775.500 952" stroke="#444" strokeWidth="1" strokeDasharray="5 94" />
      <path d="M1446.700 511.700L1762 503.500L1752 1040.700L1436 1048.700Z" fill="none" stroke="#f08a24" strokeWidth="1.500" />
      <path d="M1469 511L1762 503.500L1752 1040.700L1458 1048" fill="none" stroke="#a4560c" strokeWidth="1.900" />
    </g>
    <BossHole x={1462.5} y={530} /><BossHole x={1452} y={1029} /><Hole x={1745.5} y={523} /><Hole x={1735.5} y={1023} />
    {[[1550, 582], [1633, 580], [1706.7, 578], [1631, 675], [1704.7, 673], [1629.3, 770], [1627.3, 864.3], [1625.3, 959.3]].map(([x, y]) => <Push key={`${x}`} x={x} y={y} />)}
    {[[1548, 676.7], [1546, 771.7], [1544, 866.7], [1542.3, 961.7]].map(([x, y]) => <Led key={x} x={x} y={y} />)}
    {[[786.4, 1045.3], [1069, 1038], [1102, 1037], [1256, 1033], [1410, 1029.5]].map(([x, y]) => <Screw key={x} x={x} y={y} />)}
    <Port x={894.7} y={1026.5} /><Port x={949.4} y={1025} />
    <Jack x={1120.600} y={994} /><Jack x={1274.500} y={989.500} />
    <g fontFamily="Open Sans" fontSize="16">
      <path d="M416 1126H422V1166H416Z" fill="#bff5bf" /><path d="M420 1118L426 1132H413Z" fill="#a8f0a8" /><path d="M413 1131L426 1129V1133Z" fill="#0b9a0b" /><path d="M416 1163H422V1169H416Z" fill="#12c012" />
      <path d="M418 1167L387 1167V1173L418 1171Z" fill="#c80000" /><path d="M374 1170L386 1165V1175Z" fill="#e02020" />
      <path d="M421 1167L440 1170L438 1175L422 1172Z" fill="#0000a0" /><path d="M440 1169L446 1173L440 1176Z" fill="#0000a0" />
      <text x="417.500" y="1107.500" fill="#55f055">Y</text><text x="364.500" y="1170" fill="#f06060">X</text><text x="448" y="1174" fill="#4747ff">Z</text>
    </g>
  </Scene>
);

const Scope = () => (
  <g><S d="M2 36L34 6Q36 1 44 1Q53 2 54 8Q54 14 50 16L24 52Q20 57 12 54Q0 46 2 36Z" f="url(#paper)" s="#444" /><path d="M22 18Q34 18 38 33M32 8Q42 9 46 22" stroke="#444" fill="none" strokeWidth="1.600" /><ellipse cx="11" cy="44" rx="7" ry="10" transform="rotate(-30 11 44)" fill="#ddd" stroke="#444" strokeWidth="2" /></g>
);
const Pencil = () => (
  <g><S d="M28 60L32 47L50 25L58 31L42 53Z" f="#f0d54c" s="#333" w={2} /><S d="M50 25Q53 21 57 24Q62 28 58 32Z" f="#d64545" s="#333" w={2} /><S d="M28 60L32 47L41 53Z" f="#555" s="#333" w={1} /><S d="M48 28L51 24L58 30L55 34Z" f="#ddd" s="#333" w={1.2} /></g>
);

export default function App() {
  return (
    <Window>
      <Global />
      <Defs />
      <TitleBar>
        <Brand>
          <Ico w={31} h={32}>
            <path d="M9 3Q18 -1 20 4Q20 9 13 13M7 16Q17 14 15 20Q12 28 1 30L8 16M30 15Q20 12 19 17Q20 20 25 22Q29 26 24 28Q20 30 15 29" fill="none" stroke="#fff" strokeWidth="2.300" />
          </Ico>
          <BrandName><b>SOLID</b>WORKS</BrandName>
          <Ico w={12} h={22}><path d="M0 0L12 11L0 22Z" fill="#fff" /></Ico>
        </Brand>
        <Slot $ml={31} $w={56}><Ico w={56} h={56}><House /></Ico></Slot>
        <Slot $ml={32} $w={44}><Ico w={44} h={56}><S d="M1 1H28L43 16V55H1Z" f="url(#paper)" /><S d="M27 1L29 16H43Z" f="#ccc" s="#666" /></Ico></Slot>
        <Slot $ml={24}><Caret /></Slot>
        <Slot $ml={14} $w={63}><Ico w={63} h={58}><S d="M1 57V11L3 8H17L19 14H51V26L62 27L46 57Z" f="#bbb" /><S d="M1 57L20 26H62L46 57Z" f="url(#paper)" />
          <S d="M16 2Q36 0 36 24H47L33 42L18 24H27Q28 12 16 2Z" f="#2f8a12" s="#d8d8d8" w={2} /></Ico></Slot>
        <Slot $ml={15}><Caret /></Slot>
        <Slot $ml={18} $w={56}><Ico w={56} h={56}><S d="M1 1H55V55H8L1 48Z" f="url(#blue)" s={NAVY} w={2} /><S d="M10 1H47V28Q47 30 45 30H12Q10 30 10 28Z" f="url(#paper)" s={NAVY} /><path d="M16 7H40M16 13H40M16 19H40M16 25H40" stroke="#666" strokeWidth="2" /><S d="M15 36H42V55H15Z" f="#777" s={NAVY} w={2} /><S d="M18 39H28V54H18Z" f="#333" s="#ddd" w={1} /><rect x="20" y="41" width="5" height="11" fill="#5fb0d8" /><rect x="5" y="43" width="4" height="3" fill={NAVY} /></Ico></Slot>
        <Slot $ml={18}><Caret /></Slot>
        <Slot $ml={22} $w={48}><Ico w={48} h={48}><S d="M7 1H42V27H7Z" f="url(#paper)" /><S d="M4 21H6V27H43V21H45V28H47V42H1V28H4Z" f="url(#blue)" s={NAVY} w={2} /><path d="M9 36H40V39H9Z" fill="#012f4d" /><rect x="39" y="30" width="4" height="4" fill="#fff" /><S d="M7 41H41L45 47H3Z" f="#e6e6e6" /></Ico></Slot>
        <Slot $ml={22}><Caret /></Slot>
        <Slot $ml={20} $w={52}><Ico w={52} h={47}><S d="M1 1L8 8Q20 -1 34 2Q50 8 51 24Q50 40 36 47Q32 47 34 42Q43 32 39 22Q34 12 24 13Q20 13 17 16L23 23H1Z" f="#5c5c5c" s="#6d6d6d" w={1.4} /></Ico></Slot>
        <Slot $ml={20}><Caret $color="#868686" /></Slot>
        <PickTool>
          <Ico w={39} h={58}><S d="M2 2L37 36H22L30 53L23 57L15 40L2 52Z" f="url(#paper)" s="#222" w={1.5} /></Ico>
          <Caret />
        </PickTool>
        <Slot $ml={25} $w={33}><Ico w={33} h={62}><rect x="1.500" y="1.500" width="30" height="59" rx="15" fill="#2e2e2e" stroke="#c9c9c9" strokeWidth="3" /><circle cx="16.500" cy="18" r="9.500" fill="#e01c00" stroke="#7c1200" strokeWidth="1.500" /><circle cx="16.500" cy="42.500" r="9.500" fill="#2f8a12" stroke="#12500a" strokeWidth="1.500" /><circle cx="16" cy="17" r="4.500" fill="#ff5a3a" stroke="#ff9a86" /><circle cx="16" cy="41.500" r="4.500" fill="#53b030" stroke="#94d680" /></Ico></Slot>
        <Slot $ml={39} $w={51}><Ico w={51} h={56}><rect x="1" y="1" width="49" height="54" rx="2" fill="url(#paper)" stroke="#aaa" strokeWidth="2" /><rect x="3" y="3" width="45" height="50" fill="none" stroke={INK} strokeWidth="1.500" />
          {[8, 24, 39].map(y => <g key={y}><rect x="9" y={y} width="14" height="9" fill="#79b9d6" stroke={NAVY} strokeWidth="2" /><path d={`M28 ${y + 4.500}H43`} stroke={INK} strokeWidth="2" /></g>)}</Ico></Slot>
        <Slot $ml={28} $w={57}><Ico w={57} h={56}><Gear cx={28.5} cy={28} r={28} /></Ico></Slot>
        <Slot $ml={18}><Caret /></Slot>
        <DocName>model01.SLDASM</DocName>
        <Search>
          <Ico w={20} h={20}><rect width="20" height="20" fill="#111" /><rect x="1.500" y="1.500" width="17" height="17" fill="#222" stroke="#bbb" /><path d="M4 4L10 10L4 15M11 15.500H15" stroke="#eee" fill="none" strokeWidth="1.500" /></Ico>
          <span>搜索命令</span>
          <Ico w={22} h={22}><circle cx="8.500" cy="8.500" r="7.500" fill="none" stroke="#888" strokeWidth="1.800" /><path d="M14 14L21 21" stroke="#888" strokeWidth="2" /></Ico>
          <Slot $ml={10}><Caret $color="#666" $size={4} /></Slot>
        </Search>
        <Slot $ml={29} $w={46}><Ico w={46} h={48}><circle cx="23" cy="24" r="22.500" fill="none" stroke="#fff" strokeWidth="2" /><path d="M23 10A10.500 11.500 0 0 1 29 31Q36 34 37 41Q31 47 23 47Q15 47 9 41Q10 34 17 31A10.500 11.500 0 0 1 23 10Z" fill="#fff" /></Ico></Slot>
        <Slot $ml={47} $w={46}><Ico w={46} h={48}><circle cx="23" cy="24" r="22.500" fill="none" stroke="#fff" strokeWidth="2" /><text x="23" y="38" textAnchor="middle" fontSize="39" fontWeight="700" fill="#fff">?</text></Ico></Slot>
        <Slot $ml={54} $w={32}><Ico w={32} h={41}><rect y="34" width="32" height="6" fill="#fff" /></Ico></Slot>
        <Slot $ml={54} $w={45}><Restore c="#fff" /></Slot>
        <Slot $ml={55}><Cross c="#fff" /></Slot>
      </TitleBar>

      <Ribbon>
        {groups.map((g, i) => (
          <Group key={i}>
            {g.map(c => (
              <Command key={c.pic} $w={c.w} $on={c.on} $off={c.off} $menu={c.menu}>
                <Ico w={60} h={62} vb="0 0 60 62">{pics[c.pic]}</Ico>
                {c.lines.map(l => <Line key={l} $latin={/^[A-Z]/.test(l)}>{l}</Line>)}
                {c.menu && <Caret />}
              </Command>
            ))}
          </Group>
        ))}
      </Ribbon>

      <Work>
        <Viewport>
          <Model />
          <HeadsUp>
            <Slot $ml={0} $w={54}><Ico w={54} h={54}><S d="M16 32L22 37L8 53L1 48Z" f="#5aa3c5" s={NAVY} /><circle cx="34" cy="20" r="18" fill="#f1f6fa" stroke="#333" strokeWidth="2" /><path d="M34 6L38 12H30ZM34 34L38 28H30ZM20 20L26 15V25ZM48 20L42 15V25Z" fill="#333" /></Ico></Slot>
            <Slot $ml={14} $w={57}><Ico w={57} h={57}><path d="M22 9V1H56V36H48" fill="none" stroke="#333" strokeWidth="2.400" strokeDasharray="5 3" /><S d="M17 35L23 40L8 56L1 51Z" f="#5aa3c5" s={NAVY} /><circle cx="34" cy="23" r="18" fill="#eaf4fb" stroke="#333" strokeWidth="2" /></Ico></Slot>
            <Slot $ml={15} $w={55}><Ico w={55} h={56}><Scope /><S d="M25 37L38 24V31H54V43H38V49Z" f="#4f9cc0" s={NAVY} w={1.4} /></Ico></Slot>
            <Slot $ml={15} $w={55}><Ico w={55} h={54}><S d="M1 16Q3 1 28 1Q52 2 54 8V40L40 45V40Q32 34 25 40L20 46L1 53Z" f="#f4f4f4" s="#333" /><S d="M1 20L22 15V44L1 53Z" f="url(#hatch)" s={NAVY} /><S d="M38 12L54 8V38L38 46Z" f="url(#hatch)" s={NAVY} /><S d="M22 13Q24 8 30 8Q38 9 38 13V42Q32 38 22 42Z" f="#bbb" s="#333" /></Ico></Slot>
            <Slot $ml={13} $w={58}><Ico w={58} h={56}><g transform="translate(1,1)"><Scope /></g><S d="M16 1H31L23 15H28L1 36L11 20H5Z" f="#fbd24a" s="#a8410c" w={2} /><text x="21" y="54" fontFamily="Liberation Serif" fontWeight="700" fontSize="49" fill="#5d9dc0" stroke={NAVY} strokeWidth="1.300">A</text></Ico></Slot>
            <Slot $ml={13} $w={56}><Ico w={56} h={56}><S d="M1 17L16 1H55V39L40 55M40 17L55 1" s="#333" w={2} /><S d="M16 1V17H1M40 39H55" s="#333" w={1.6} /><S d="M1 17H40V55H1Z" f="#7fc0dc" s={NAVY} w={2} /><path d="M28 4V14M42 28H52" stroke="#333" strokeWidth="3" /><path d="M23 10H33L28 16ZM47 23V33L40 28Z" fill="#333" /></Ico></Slot>
            <Slot $ml={12}><Caret $color="#999" /></Slot>
            <Slot $ml={16} $w={48}><Ico w={48} h={55}><S d="M1 9L18 18V54L1 43Z" f="#5d9fc0" s={NAVY} /><S d="M18 18L46 12V42L18 54Z" f="#dfe4e8" s="#444" /><path d="M18 18L31 15V48L18 54Z" fill="#86cdea" /><S d="M1 9L28 1L46 12L18 18Z" f="#eef3f6" s="#333" /><path d="M3 9L15 5L31 15L18 18Z" fill="#9bdcf5" /><path d="M18 18V54" stroke={NAVY} /></Ico></Slot>
            <Slot $ml={16}><Caret $color="#999" /></Slot>
            <EyeTool>
              <Ico w={56} h={48}><S d="M1 24Q14 5 28 5Q42 5 55 24Q42 42 28 42Q14 42 1 24Z" f="url(#paper)" s="#333" w={2} /><ellipse cx="28" cy="20" rx="13" ry="15" fill="#111" /><ellipse cx="29" cy="20" rx="8" ry="10" fill="#555" /><ellipse cx="24" cy="17" rx="3" ry="5" fill="#fff" /><path d="M28 0V47" stroke="#111" strokeWidth="3.500" /></Ico>
              <Caret $color="#444" />
            </EyeTool>
            <Slot $ml={0} $w={60}><Ico w={60} h={61}><Ball /><Pencil /></Ico></Slot>
            <Slot $ml={12} $w={56}><Ico w={56} h={60}><path d="M1 24H55V59H1Z" fill="#444" /><path d="M3 26H12V30H3ZM44 26H53V30H44ZM3 34H10L8 40H3ZM46 34H53V40H48ZM13 40H20L18 48H10ZM28 40H36V48H28ZM38 42H45L47 48H39ZM6 49H12L9 57H3ZM20 48H28L28 57H18ZM44 49H50L53 57H46ZM36 48H40L42 57H37Z" fill="#eee" /><g transform="translate(4,-1) scale(.8)"><Ball /></g></Ico></Slot>
            <Slot $ml={12}><Caret $color="#999" /></Slot>
            <Slot $ml={14} $w={52}><Ico w={52} h={48}><rect x="1" y="1" width="50" height="36" fill="#333" /><rect x="4.500" y="5" width="43" height="28" fill="#c4c4c4" /><path d="M23 37H29V43H35V47H17V43H23Z" fill="#444" /></Ico></Slot>
            <Slot $ml={14}><Caret $color="#999" /></Slot>
            <Slot $ml={178} $w={36}><Ico w={36} h={44}><rect x="1" y="1" width="34" height="42" fill="none" stroke="#6a6a6a" strokeWidth="2" /><path d="M0 2H36" stroke="#6a6a6a" strokeWidth="4" /><path d="M4 22L14 15V29Z" fill="#555" /></Ico></Slot>
            <Slot $ml={34} $w={36}><Ico w={36} h={44}><rect x="1" y="1" width="34" height="42" fill="none" stroke="#6a6a6a" strokeWidth="2" /><path d="M0 2H36" stroke="#6a6a6a" strokeWidth="4" /><path d="M33 22L23 15V29Z" fill="#555" /></Ico></Slot>
            <Slot $ml={36} $w={32}><Ico w={32} h={40}><rect y="34" width="32" height="6" fill="#6a6a6a" /></Ico></Slot>
            <Slot $ml={30} $w={46}><Restore c="#6a6a6a" bg="#eceef3" /></Slot>
            <Slot $ml={32}><Cross c="#6a6a6a" /></Slot>
          </HeadsUp>
          <TaskPane>
            <TaskTab><Ico w={56} h={53} vb="0 2 56 53"><House /></Ico></TaskTab>
            <TaskTab><Ico w={46} h={52}><S d="M2 6L14 3L20 5L26 2L33 3L39 1L44 10V48L30 49L14 51L2 40Z" f="#ccc" s="#222" /><S d="M2 6L14 14V50L2 40Z" f="#ddd" s="#666" /><S d="M14 14Q20 16 24 12V48Q18 52 14 50ZM24 12Q30 14 34 10V46Q30 50 24 48ZM34 10Q40 12 44 9V44Q40 48 34 46Z" f="url(#paper)" s="#666" /><S d="M2 6L12 4L24 12Q20 16 14 14ZM12 4L22 3L34 10Q30 14 24 12ZM22 3L33 2L44 9Q40 12 34 10Z" f="#f2f2f2" s="#777" /></Ico></TaskTab>
            <TaskTab><Ico w={56} h={46}><S d="M2 45V1H18V6H46V16H55L44 45Z" f="#bdbdbd" /><S d="M3 45L15 16H55L43 45Z" f="url(#paper)" s="#555" /></Ico></TaskTab>
            <TaskTab $bg="#9c9c9c"><Ico w={56} h={50}><S d="M1 1H55V49H1Z" f="url(#paper)" s="#222" w={2.4} /><S d="M7 7H30V20H7ZM35 7H50V20H35ZM7 33H13V25H24V33H30V44H7Z" f="url(#gold)" s={BROWN} w={2.2} /><S d="M35 29H55V49H35Z" f="#d5d5d5" s="#222" w={2} /><path d="M36 30H54V36H36Z" fill="#777" /></Ico></TaskTab>
            <TaskTab><Ico w={54} h={53} vb="1 1 58 58"><Ball /></Ico></TaskTab>
            <TaskTab><Ico w={56} h={51}><ListCard /></Ico></TaskTab>
            <TaskTab $bg="#adadad"><Ico w={56} h={48}><S d="M1 1H38V27H19L10 37V27H1Z" f="url(#blue)" s={NAVY} w={2} /><S d="M21 15H55V37H47V47L38 37H21Z" f="url(#paper)" w={2} /></Ico></TaskTab>
          </TaskPane>
          <Hint>输入1 ← Board-Part-1&lt;1&gt;</Hint>
          <Ime>
            <Ico w={56} h={54}><S d="M6 9L42 1Q45 0 46 4L54 37Q55 42 49 45Q32 54 15 53Q11 53 10 49L1 15Q0 10 6 9Z" f="url(#ime)" s="#f25a20" w={1} /><path d="M42 13Q12 12 12 23Q13 29 30 27Q45 26 44 34Q40 43 14 41" fill="none" stroke="#fff" strokeWidth="8" /></Ico>
            <ImeBox>英<Ico w={20} h={20}><circle cx="4" cy="4" r="3.500" fill="#0a70da" /><path d="M15.500 8A3.700 3.700 0 0 1 19 13Q18 18 13 20Q15 17 14.500 15A3.600 3.600 0 0 1 15.500 8Z" fill="#0a70da" /></Ico></ImeBox>
          </Ime>
        </Viewport>

        <Left>
          <Tabs>
            <Tab $w={88} $on>装配体</Tab><Tab $w={64}>布局</Tab><Tab $w={64}>草图</Tab><Tab $w={64}>标注</Tab><Tab $w={64}>评估</Tab>
            <Tab $w={208} $latin>SOLIDWORKS 插件</Tab><Tab $w={65}>MBD</Tab>
          </Tabs>
          <PanelRow>
            <Panel>
              <Grip><Dot /></Grip>
              <PanelTabs>
                <PanelTab $on><Ico w={50} h={60}><AsmShape /></Ico></PanelTab>
                <PanelTab><Ico w={56} h={52}><ListCard /></Ico></PanelTab>
                <PanelTab><Ico w={44} h={54}><path d="M2 1H6V53H2Z" fill="#eee" /><path d="M6 11H16M6 40H22" stroke="#ddd" strokeWidth="2" /><path d="M15 1H35L37 5V23H18L15 20ZM22 29H41L43 33V51H24L21 47Z" fill="#222" stroke="#ccc" strokeWidth="1.300" strokeDasharray="20 3" /><path d="M18 5H36V23H18ZM24 33H42V51H24Z" fill="url(#paper)" /></Ico></PanelTab>
                <PanelTab><Ico w={56} h={56}><circle cx="28" cy="28" r="21" fill="none" stroke="#555" strokeWidth="2" /><circle cx="28" cy="28" r="16.500" fill="none" stroke="#555" strokeWidth="1.500" /><path d="M28 0V56M0 28H56" stroke="#1c1c1c" strokeWidth="4" /></Ico></PanelTab>
                <PanelTab />
                <Pager><span><Arrow $show $left $color="#000" /></span><span><Arrow $show $color="#000" /></span></Pager>
              </PanelTabs>
              <Filter>
                <Ico w={27} h={28}><S d="M1 5H25L16 16V27L11 24V16Z" f="url(#paper)" s="#666" w={1} /><S d="M1 1H25V5H1Z" f="#48a6d6" s={NAVY} /></Ico>
                <Caret $size={4} />
              </Filter>
              <TreeBox>
                <Tree>
                  {rows.map((r, i) => (
                    <Row key={i} $root={r.root}>
                      <Arrow $show={r.open} />
                      <Ico w={30} h={30}>{treePics[r.pic]}</Ico>
                      <RowText $ls={r.ls ?? 0}>{r.text}{r.tail && <Suffix>{r.tail}</Suffix>}</RowText>
                    </Row>
                  ))}
                  <Rollback />
                </Tree>
                <VTrack><div /></VTrack>
                <HTrack><div /></HTrack>
              </TreeBox>
              <PanelFoot />
            </Panel>
            <Splitter><Dot /></Splitter>
          </PanelRow>
        </Left>
      </Work>

      <SheetBar>
        <SheetNav>
          {[0, 1, 2, 3].map(i => (
            <span key={i}><Ico w={12} h={14}>{i < 2 ? <path d="M10 1L3 7L10 13Z" fill="#77778c" /> : <path d="M2 1L9 7L2 13Z" fill="#77778c" />}{i === 0 && <path d="M1 1V13" stroke="#77778c" strokeWidth="1.500" />}{i === 3 && <path d="M11 1V13" stroke="#77778c" strokeWidth="1.500" />}</Ico></span>
          ))}
        </SheetNav>
        <Sheet $w={79} $pad={18} $on>模型</Sheet>
        <Sheet $w={104} $pad={10}>3D 视图</Sheet>
        <Sheet $w={146} $pad={10}>运动算例 1</Sheet>
      </SheetBar>
      <Status>
        <Cell $w={1727} $ls={0.45}>SOLIDWORKS Premium 2020 SP5.0</Cell>
        <Cell $w={103}>完全定义</Cell>
        <Cell $w={255} $ls={0.1}>在编辑 装配体</Cell>
        <Cell $w={86}>自定义</Cell>
        <Caret $up $size={3} />
        <Slot $ml={29}><Ico w={27} h={26}><S d="M1 3L10 1L26 14V19L16 25L1 12Z" f="#eee" s="#222" /><S d="M1 3L10 1L26 14L16 21L1 9Z" f="#fff" s="#666" w={1} /><circle cx="7" cy="6" r="2.800" fill="#444" /><path d="M11 13L16 8M14 16L19 11M17 18L21 13" stroke="#444" strokeWidth="1.600" /></Ico></Slot>
      </Status>
    </Window>
  );
}
